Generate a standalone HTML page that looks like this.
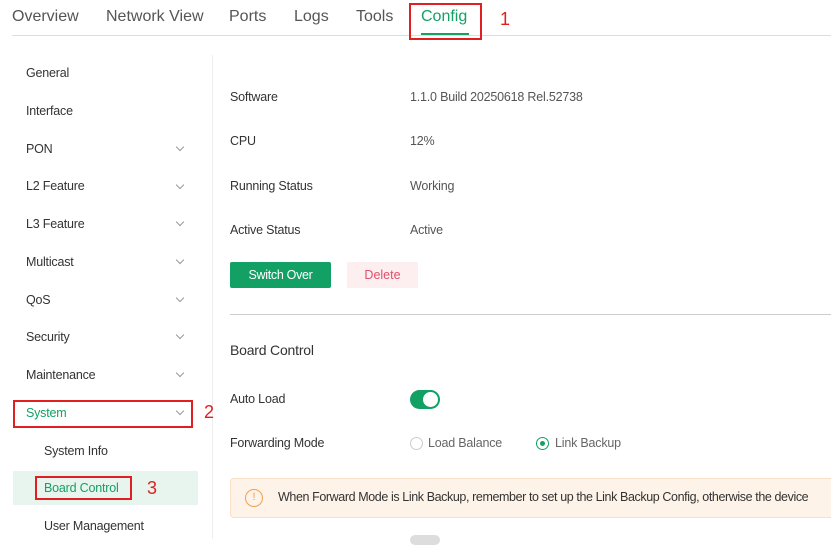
<!DOCTYPE html>
<html><head><style>
*{margin:0;padding:0;box-sizing:border-box}
body{width:831px;height:539px;overflow:hidden;background:#fff;font-family:"Liberation Sans",sans-serif;color:#333;position:relative}
.a{position:absolute;white-space:nowrap}
.tab{font-size:16px;color:#555;top:8px}
.side{font-size:12.5px;color:#333;left:26px;letter-spacing:-0.2px}
.chev{position:absolute;left:177px;width:6px;height:6px;border-right:1px solid #999;border-bottom:1px solid #999;transform:rotate(45deg)}
.lbl{font-size:12.5px;color:#333;left:230px;letter-spacing:-0.2px}
.val{font-size:12.5px;color:#555;left:410px;letter-spacing:-0.2px}
.red{color:#e02020;font-size:18px}
</style></head><body>
<div class="a tab" style="left:12px">Overview</div>
<div class="a tab" style="left:106px">Network View</div>
<div class="a tab" style="left:229px">Ports</div>
<div class="a tab" style="left:294px">Logs</div>
<div class="a tab" style="left:356px">Tools</div>
<div class="a tab" style="left:421px;color:#15a064">Config</div>
<div class="a" style="left:12px;top:35px;width:819px;height:1px;background:#ddd"></div>
<div class="a" style="left:421px;top:33px;width:48px;height:2px;background:#15a064"></div>
<div class="a" style="left:409px;top:3px;width:73px;height:37px;border:2px solid #e02020"></div>
<div class="a red" style="left:500px;top:9px">1</div>

<div class="a" style="left:212px;top:55px;width:1px;height:484px;background:#eee"></div>

<div class="a side" style="top:66px">General</div>
<div class="a side" style="top:104px">Interface</div>
<div class="a side" style="top:142px">PON</div><div class="chev" style="top:144px"></div>
<div class="a side" style="top:179px">L2 Feature</div><div class="chev" style="top:182px"></div>
<div class="a side" style="top:217px">L3 Feature</div><div class="chev" style="top:219px"></div>
<div class="a side" style="top:255px">Multicast</div><div class="chev" style="top:257px"></div>
<div class="a side" style="top:293px">QoS</div><div class="chev" style="top:295px"></div>
<div class="a side" style="top:330px">Security</div><div class="chev" style="top:332px"></div>
<div class="a side" style="top:368px">Maintenance</div><div class="chev" style="top:370px"></div>
<div class="a side" style="top:406px;color:#15a064">System</div><div class="chev" style="top:408px"></div>
<div class="a" style="left:13px;top:400px;width:180px;height:28px;border:2px solid #e02020"></div>
<div class="a red" style="left:204px;top:402px">2</div>
<div class="a side" style="top:444px;left:44px">System Info</div>
<div class="a" style="left:13px;top:471px;width:185px;height:34px;background:#e8f5ee"></div>
<div class="a side" style="top:481px;left:44px;color:#15a064">Board Control</div>
<div class="a" style="left:35px;top:476px;width:97px;height:24px;border:2px solid #e02020"></div>
<div class="a red" style="left:147px;top:478px">3</div>
<div class="a side" style="top:519px;left:44px">User Management</div>

<div class="a lbl" style="top:90px">Software</div><div class="a val" style="top:90px">1.1.0 Build 20250618 Rel.52738</div>
<div class="a lbl" style="top:134px">CPU</div><div class="a val" style="top:134px">12%</div>
<div class="a lbl" style="top:179px">Running Status</div><div class="a val" style="top:179px">Working</div>
<div class="a lbl" style="top:223px">Active Status</div><div class="a val" style="top:223px">Active</div>
<div class="a" style="left:230px;top:262px;width:101px;height:26px;background:#12a064;border-radius:2px;color:#fff;font-size:12.5px;text-align:center;line-height:26px;letter-spacing:-0.3px">Switch Over</div>
<div class="a" style="left:347px;top:262px;width:71px;height:26px;background:#fdeef0;border-radius:2px;color:#e0506a;font-size:12.5px;text-align:center;line-height:26px">Delete</div>
<div class="a" style="left:230px;top:314px;width:601px;height:1px;background:#ccc"></div>
<div class="a" style="left:230px;top:342px;font-size:14px;color:#333;letter-spacing:-0.2px">Board Control</div>
<div class="a lbl" style="top:392px">Auto Load</div>
<div class="a" style="left:410px;top:390px;width:30px;height:19px;border-radius:10px;background:#12a064"><div style="position:absolute;right:2px;top:2px;width:15px;height:15px;border-radius:50%;background:#fff"></div></div>
<div class="a lbl" style="top:436px">Forwarding Mode</div>
<div class="a" style="left:410px;top:437px;width:13px;height:13px;border:1px solid #ccc;border-radius:50%"></div>
<div class="a val" style="left:428px;top:436px;color:#666">Load Balance</div>
<div class="a" style="left:536px;top:437px;width:13px;height:13px;border:1px solid #12a064;border-radius:50%"><div style="position:absolute;left:3px;top:3px;width:5px;height:5px;border-radius:50%;background:#12a064"></div></div>
<div class="a val" style="left:555px;top:436px;color:#666">Link Backup</div>
<div class="a" style="left:230px;top:478px;width:610px;height:40px;background:#fdf3e8;border:1px solid #f8e0c6;border-radius:4px"></div>
<div class="a" style="left:245px;top:489px;width:18px;height:18px;border:1.5px solid #f0a050;border-radius:50%;color:#f0a050;font-size:11px;text-align:center;line-height:15px">!</div>
<div class="a" style="left:278px;top:490px;font-size:12.5px;color:#333;letter-spacing:-0.4px">When Forward Mode is Link Backup, remember to set up the Link Backup Config, otherwise the device</div>
<div class="a" style="left:410px;top:535px;width:30px;height:10px;border-radius:6px;background:#ddd"></div>
</body></html>
